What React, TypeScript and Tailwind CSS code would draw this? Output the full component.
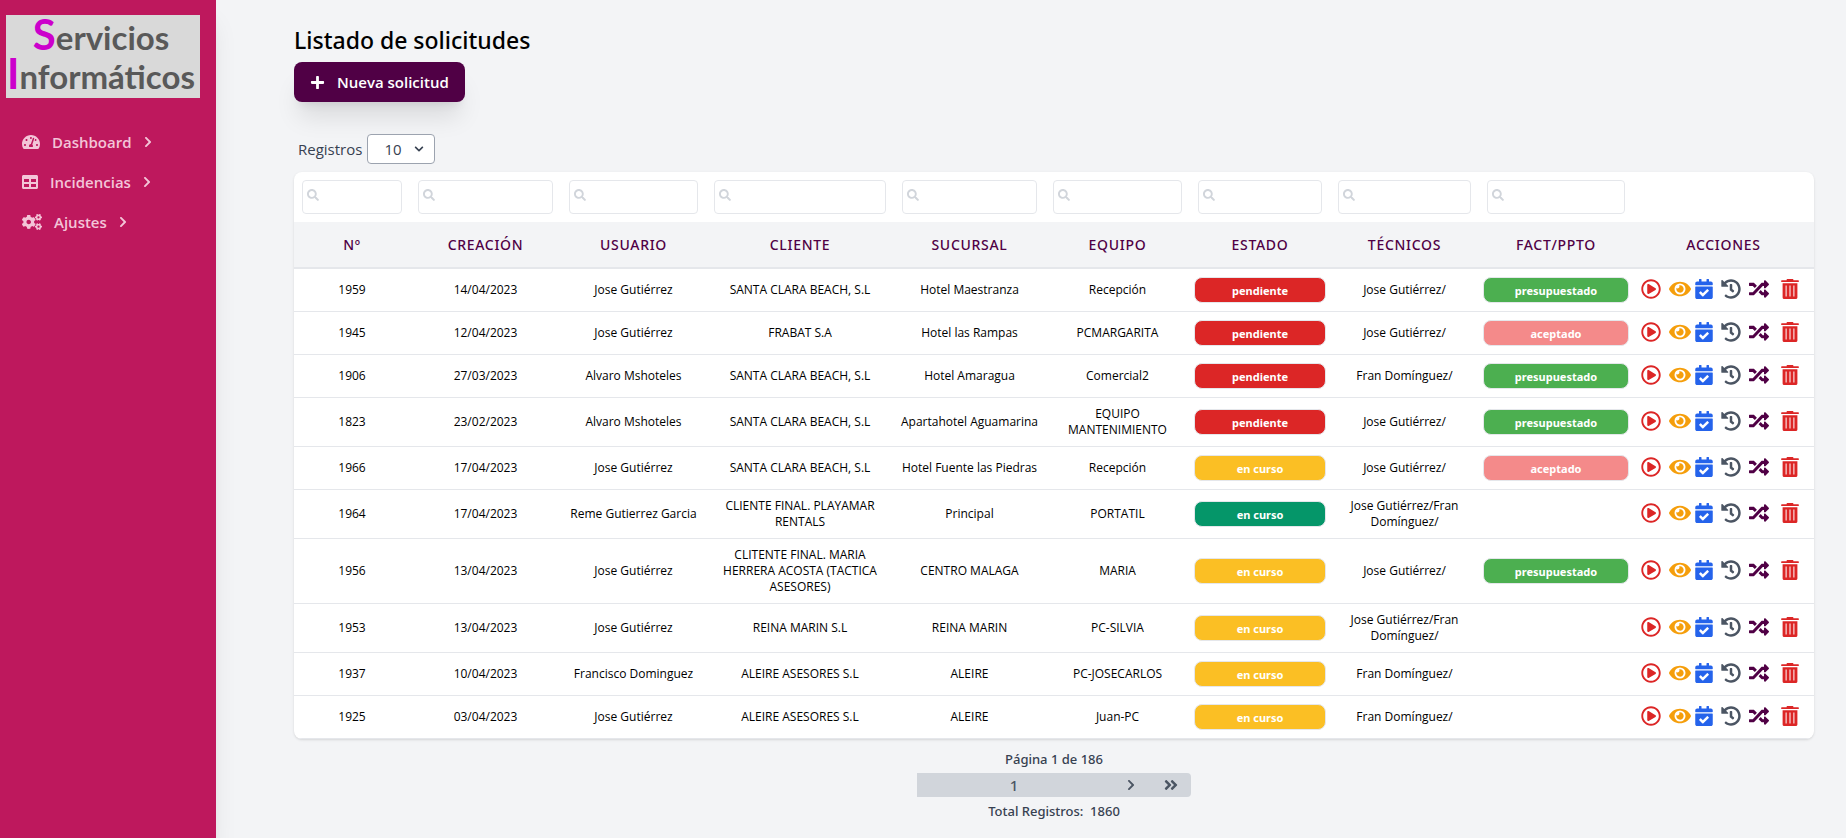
import React from "react";
import {
  FaTachometerAlt, FaTable, FaCogs, FaChevronRight, FaPlus, FaSearch, FaChevronDown,
  FaRegPlayCircle, FaEye, FaCalendarCheck, FaHistory, FaRandom, FaAngleDoubleRight,
} from "react-icons/fa";

const columns = [
  { label: "Nº", width: "w-[116px]" },
  { label: "Creación", width: "w-[151px]" },
  { label: "Usuario", width: "w-[145px]" },
  { label: "Cliente", width: "w-[188px]" },
  { label: "Sucursal", width: "w-[151px]" },
  { label: "Equipo", width: "w-[145px]" },
  { label: "Estado", width: "w-[140px]" },
  { label: "Técnicos", width: "w-[149px]" },
  { label: "Fact/Ppto", width: "w-[154px]" },
  { label: "Acciones", width: "w-[181px]" },
];

const red = "bg-[#dc2626]";
const yellow = "bg-[#fbbf24]";
const green = "bg-[#059669]";

const rows = [
  ["1959", "14/04/2023", "Jose Gutiérrez", "SANTA CLARA BEACH, S.L", "Hotel Maestranza", "Recepción", "pendiente", red, "Jose Gutiérrez/", "presupuestado"],
  ["1945", "12/04/2023", "Jose Gutiérrez", "FRABAT S.A", "Hotel las Rampas", "PCMARGARITA", "pendiente", red, "Jose Gutiérrez/", "aceptado"],
  ["1906", "27/03/2023", "Alvaro Mshoteles", "SANTA CLARA BEACH, S.L", "Hotel Amaragua", "Comercial2", "pendiente", red, "Fran Domínguez/", "presupuestado"],
  ["1823", "23/02/2023", "Alvaro Mshoteles", "SANTA CLARA BEACH, S.L", "Apartahotel Aguamarina", "EQUIPO MANTENIMIENTO", "pendiente", red, "Jose Gutiérrez/", "presupuestado"],
  ["1966", "17/04/2023", "Jose Gutiérrez", "SANTA CLARA BEACH, S.L", "Hotel Fuente las Piedras", "Recepción", "en curso", yellow, "Jose Gutiérrez/", "aceptado"],
  ["1964", "17/04/2023", "Reme Gutierrez Garcia", "CLIENTE FINAL. PLAYAMAR RENTALS", "Principal", "PORTATIL", "en curso", green, "Jose Gutiérrez/Fran Domínguez/", ""],
  ["1956", "13/04/2023", "Jose Gutiérrez", "CLITENTE FINAL. MARIA HERRERA ACOSTA (TACTICA ASESORES)", "CENTRO MALAGA", "MARIA", "en curso", yellow, "Jose Gutiérrez/", "presupuestado"],
  ["1953", "13/04/2023", "Jose Gutiérrez", "REINA MARIN S.L", "REINA MARIN", "PC-SILVIA", "en curso", yellow, "Jose Gutiérrez/Fran Domínguez/", ""],
  ["1937", "10/04/2023", "Francisco Dominguez", "ALEIRE ASESORES S.L", "ALEIRE", "PC-JOSECARLOS", "en curso", yellow, "Fran Domínguez/", ""],
  ["1925", "03/04/2023", "Jose Gutiérrez", "ALEIRE ASESORES S.L", "ALEIRE", "Juan-PC", "en curso", yellow, "Fran Domínguez/", ""],
];

function Logo() {
  return (
    <div className="h-[83px] w-[194px] bg-[#d9d9d9] pr-1 text-center font-['Lato',sans-serif] text-[33px] leading-[39px] font-bold whitespace-nowrap text-[#595959]">
      <div className="h-[39px]"><span className="text-[42px] text-[#cc00cc]">S</span>ervicios</div>
      <div className="h-[39px]"><span className="text-[42px] text-[#cc00cc]">I</span>nformáticos</div>
    </div>
  );
}

function TrashIcon() {
  return (
    <svg viewBox="0 0 18 20" className="h-5 w-[18px]" fill="currentColor" aria-hidden="true">
      <path d="M5.6 0.6 6.2 0h5.6l.6.6V1.2h4.9q.5 0 .5.5v1.4H.2V1.7q0-.5.5-.5h4.9z" />
      <path fillRule="evenodd" d="M1.6 4.2h14.8V18.4q0 1.6-1.6 1.6H3.2q-1.6 0-1.6-1.6zM4.6 6.6v10.8h1V6.6zM8.5 6.6v10.8h1V6.6zM12.4 6.6v10.8h1V6.6z" />
    </svg>
  );
}

function Badge({ text, color }: { text: string; color: string }) {
  return (
    <span className={`block rounded-lg border border-gray-200 pt-[5px] pb-[3px] font-['Noto_Sans',sans-serif] text-[11px] leading-4 font-bold text-white ${color}`}>
      {text}
    </span>
  );
}

function Actions() {
  return (
    <div className="flex items-center pb-0.5 pl-2">
      <button aria-label="Iniciar" className="mr-2 text-[#dc2626]"><FaRegPlayCircle size={20} /></button>
      <button aria-label="Ver" className="mr-[3px] text-[#f59e0b]"><FaEye size={22} /></button>
      <button aria-label="Agendar" className="mr-[7px] text-[#2563eb]"><FaCalendarCheck size={20} /></button>
      <button aria-label="Historial" className="mr-2 text-[#4b5563]"><FaHistory size={20} /></button>
      <button aria-label="Reasignar" className="mr-3 text-[#500045]"><FaRandom size={20} /></button>
      <button aria-label="Eliminar" className="text-[#dc2626]"><TrashIcon /></button>
    </div>
  );
}

const menu = [
  { label: "Dashboard", icon: <FaTachometerAlt className="h-4 w-[18px]" /> },
  { label: "Incidencias", icon: <FaTable className="h-4 w-4" /> },
  { label: "Ajustes", icon: <FaCogs className="h-4 w-5" /> },
];

export default function App() {
  return (
    <div className="flex min-h-screen bg-[#f3f4f6] font-['Open_Sans','Noto_Sans',sans-serif] text-black">
      <aside className="w-[216px] shrink-0 bg-[#be185d] shadow-xl">
        <div className="px-1.5 pt-[15px]"><Logo /></div>
        <nav className="mt-6 flex flex-col">
          {menu.map((m) => (
            <a key={m.label} href="#" className="flex h-10 items-center gap-3 pl-[22px] text-[15px] font-semibold text-[#f3c5d8]">
              {m.icon}
              {m.label}
              <FaChevronRight className="h-3 w-2" />
            </a>
          ))}
        </nav>
      </aside>

      <main className="min-w-0 flex-1 pt-6 pr-8 pl-[78px]">
        <h1 className="font-['Noto_Sans',sans-serif] text-[23px] leading-8 font-medium">Listado de solicitudes</h1>
        <button className="mt-1.5 flex h-10 items-center gap-3 rounded-lg bg-[#500045] px-4 text-[15px] font-semibold text-white shadow-xl">
          <FaPlus size={15} />
          Nueva solicitud
        </button>

        <div className="mt-8 flex items-center gap-[5px] pl-1 text-[15px] text-[#374151]">
          <label htmlFor="registros">Registros</label>
          <div className="relative">
            <select id="registros" defaultValue="10" className="h-[30px] w-[68px] appearance-none rounded border border-[#9ca3af] bg-white pl-4">
              <option>10</option>
              <option>25</option>
              <option>50</option>
            </select>
            <FaChevronDown size={10} className="pointer-events-none absolute top-[10px] right-[11px]" />
          </div>
        </div>

        <div className="mt-2 overflow-hidden rounded-lg bg-white shadow">
          <table className="w-full table-fixed border-collapse text-center text-[12px] leading-4">
            <colgroup>
              {columns.map((c) => <col key={c.label} className={c.width} />)}
            </colgroup>
            <thead>
              <tr>
                {columns.map((c, i) => (
                  <td key={c.label} className="h-[50px] px-2">
                    {i < 9 && (
                      <div className="relative">
                        <FaSearch size={12} className="pointer-events-none absolute top-[9px] left-[5px] text-[#d1d5db]" />
                        <input aria-label={`Buscar ${c.label}`} className="block h-[34px] w-full rounded border border-[#e5e7eb] pl-5" />
                      </div>
                    )}
                  </td>
                ))}
              </tr>
              <tr className="border-b-2 border-[#e5e7eb] bg-[#f3f4f6]">
                {columns.map((c) => (
                  <th key={c.label} className="h-[46px] font-['Noto_Sans',sans-serif] text-[14px] font-medium tracking-wider text-[#500045] uppercase">{c.label}</th>
                ))}
              </tr>
            </thead>
            <tbody>
              {rows.map((r) => (
                <tr key={r[0]} className="border-b border-[#e5e7eb]">
                  {r.slice(0, 6).map((v, i) => <td key={i} className={i === 2 || i === 4 ? "py-2" : "px-3 py-2"}>{v}</td>)}
                  <td className="px-1 py-2"><Badge text={r[6]} color={r[7]} /></td>
                  <td className="px-3 py-2">{r[8]}</td>
                  <td className="px-1 py-2">
                    {r[9] && <Badge text={r[9]} color={r[9] === "aceptado" ? "bg-[#f48a8a]" : "bg-[#4caf50]"} />}
                  </td>
                  <td><Actions /></td>
                </tr>
              ))}
            </tbody>
          </table>
        </div>

        <footer className="mt-[10px] flex flex-col items-center font-['Noto_Sans',sans-serif] text-[13px] leading-5 font-medium text-[#374151]">
          <p>Página 1 de 186</p>
          <div className="my-1 flex h-6 w-[274px] items-center rounded-r bg-[#d1d5db] text-[#4b5563]">
            <span className="w-[194px] text-center text-[15px]">1</span>
            <button aria-label="Siguiente" className="flex w-10 justify-center"><FaChevronRight size={12} /></button>
            <button aria-label="Última" className="flex w-10 justify-center"><FaAngleDoubleRight size={16} /></button>
          </div>
          <p className="whitespace-pre">Total Registros:  1860</p>
        </footer>
      </main>
    </div>
  );
}
